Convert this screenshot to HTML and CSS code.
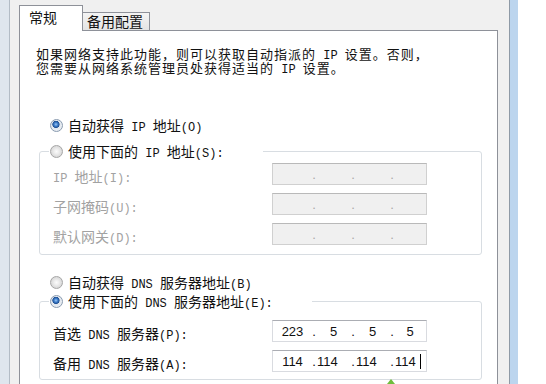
FILE: index.html
```html
<!DOCTYPE html>
<html lang="zh-CN">
<head>
<meta charset="utf-8">
<title>Internet 协议版本 4 (TCP/IPv4) 属性</title>
<link rel="stylesheet" href="styles.css">
</head>
<body>
<div class="frame-l"></div>
<div class="dialog">
  <div class="tabs">
    <div class="tab active">常规</div>
    <div class="tab">备用配置</div>
  </div>
  <div class="panel">
    <p class="intro">如果网络支持此功能，则可以获取自动指派的<span class="en"> IP </span>设置。否则，<br>您需要从网络系统管理员处获得适当的<span class="en"> IP </span>设置。</p>

    <div class="opt"><span class="radio on"></span><span>自动获得<span class="en"> IP </span>地址<span class="en">(O)</span></span></div>
    <fieldset class="group g1">
      <legend><span class="lg"><span class="radio"></span><span>使用下面的<span class="en"> IP </span>地址<span class="en">(S):</span></span></span></legend>
      <div class="fields">
        <span class="lbl off"><span class="en">IP </span>地址<span class="en">(I):</span></span>
        <div class="ip dis"><span class="s1"></span><span class="d">.</span><span class="s"></span><span class="d">.</span><span class="s"></span><span class="d">.</span><span class="s4"></span></div>
        <span class="lbl off">子网掩码<span class="en">(U):</span></span>
        <div class="ip dis"><span class="s1"></span><span class="d">.</span><span class="s"></span><span class="d">.</span><span class="s"></span><span class="d">.</span><span class="s4"></span></div>
        <span class="lbl off">默认网关<span class="en">(D):</span></span>
        <div class="ip dis"><span class="s1"></span><span class="d">.</span><span class="s"></span><span class="d">.</span><span class="s"></span><span class="d">.</span><span class="s4"></span></div>
      </div>
    </fieldset>

    <div class="opt opt-dns"><span class="radio"></span><span>自动获得<span class="en"> DNS </span>服务器地址<span class="en">(B)</span></span></div>
    <fieldset class="group g2">
      <legend><span class="lg"><span class="radio on"></span><span>使用下面的<span class="en"> DNS </span>服务器地址<span class="en">(E):</span></span></span></legend>
      <div class="fields">
        <span class="lbl">首选<span class="en"> DNS </span>服务器<span class="en">(P):</span></span>
        <div class="ip"><span class="s1">223</span><span class="d">.</span><span class="s">5</span><span class="d">.</span><span class="s">5</span><span class="d">.</span><span class="s4">5</span></div>
        <span class="lbl">备用<span class="en"> DNS </span>服务器<span class="en">(A):</span></span>
        <div class="ip typed"><span class="s1">114</span><span class="d">.</span><span class="s">114</span><span class="d">.</span><span class="s">114</span><span class="d">.</span><span class="s4">114<span class="caret"></span></span></div>
      </div>
    </fieldset>
  </div>
</div>
<div class="frame-r"></div>
<div class="pointer"></div>
</body>
</html>
```
FILE: styles.css
```css
html, body {
  margin: 0;
  padding: 0;
}
body {
  position: relative;
  display: flex;
  width: 546px;
  height: 384px;
  overflow: hidden;
  background: #ffffff;
  font-family: "Noto Sans CJK SC", sans-serif;
  font-size: 14px;
  color: #111;
}
.frame-l {
  flex: none;
  width: 9px;
  background: #dfe6ee;
  border-right: 1px solid #b3bcc6;
}
.dialog {
  flex: none;
  width: 479px;
  padding: 5px 11px 0 9px;
  background: #f0f0f0;
  display: flex;
  flex-direction: column;
}
.frame-r {
  flex: none;
  width: 8px;
  background: #bcd5ee;
  border-left: 1px solid #8e9aa6;
}
.tabs {
  display: flex;
  align-items: flex-end;
  height: 25px;
}
.tab {
  box-sizing: border-box;
  height: 18px;
  width: 67px;
  padding-left: 4px;
  line-height: 17px;
  border-top: 1px solid #8e9199;
  border-right: 1px solid #8e9199;
  background: linear-gradient(#f4f4f4, #e4e4e4);
  white-space: nowrap;
}
.tab.active {
  position: relative;
  z-index: 1;
  width: 64px;
  height: 26px;
  margin-bottom: -1px;
  padding: 3px 0 0 9px;
  border-left: 1px solid #8e9199;
  background: #ffffff;
}
.panel {
  flex: 1;
  box-sizing: border-box;
  background: #ffffff;
  border: 1px solid #8e9199;
  border-bottom: none;
}
.intro {
  margin: 16px 0 0 16px;
  height: 26px;
  font-size: 13px;
  letter-spacing: 1px;
  line-height: 14px;
  white-space: nowrap;
}
.en {
  font-family: "Liberation Mono", monospace;
  font-size: 12px;
  line-height: 0;
  letter-spacing: 0;
}
.opt {
  display: flex;
  align-items: center;
  height: 17px;
  line-height: 17px;
  margin: 43.5px 0 0 30px;
  white-space: nowrap;
}
.opt-dns {
  margin-top: 18.5px;
}
.radio {
  flex: none;
  box-sizing: border-box;
  width: 13px;
  height: 13px;
  margin-right: 5px;
  border-radius: 50%;
  border: 1px solid #a6a6a6;
  background: radial-gradient(circle, #fbfbfb 0, #f0f0f0 2px, #d9d9d9 5.5px);
}
.radio.on {
  border-color: #8a9bb0;
  background:
    radial-gradient(circle at 45% 40%, #9cc7f2 0, #3f7fcc 1.8px, #1f4f92 3.3px, #dfe6ee 3.9px, #e8ecf1 5.5px);
}
.group {
  box-sizing: border-box;
  width: 443px;
  min-width: 0;
  margin: 9px 0 0 19px;
  padding: 0 0 9px 0;
  border: 1px solid #d8dde2;
  border-radius: 3px;
}
.group legend {
  margin-left: 9px;
  padding: 0 39px 0 1px;
}
.lg {
  display: flex;
  align-items: center;
  height: 17px;
  line-height: 17px;
  white-space: nowrap;
}
.g2 {
  margin-top: 2px;
  padding-bottom: 7px;
}
.fields {
  display: grid;
  grid-template-columns: 219px 155px;
  grid-auto-rows: 22px;
  row-gap: 8px;
  margin: 3.5px 0 0 13px;
}
.g2 .fields {
  margin-top: 10.5px;
}
.lbl {
  align-self: center;
  margin-top: 4px;
  line-height: 17px;
  white-space: nowrap;
}
.off {
  color: #a2a2a2;
}
.ip {
  display: flex;
  align-items: center;
  box-sizing: border-box;
  height: 22px;
  border: 1px solid #d9dbe0;
  border-top-color: #abadb3;
  background: #ffffff;
  font-family: "Liberation Sans", sans-serif;
  font-size: 13px;
  line-height: 15px;
  color: #111;
}
.ip.dis {
  background: #f0f0f0;
  border-color: #d0d0d0;
  border-top-color: #b9b9b9;
  color: #a8a8a8;
}
.ip span {
  box-sizing: border-box;
  text-align: center;
  white-space: nowrap;
}
.s1 { width: 39px; }
.s { width: 35px; }
.s4 { width: 32px; }
.d { width: 4px; }
.typed .s,
.typed .s4 {
  text-align: left;
  padding-left: 1px;
}
.caret {
  display: inline-block;
  width: 1px;
  height: 15px;
  margin-left: 4px;
  vertical-align: -3px;
  background: #000;
}
.pointer {
  position: absolute;
  left: 387px;
  top: 379px;
  width: 0;
  height: 0;
  border-left: 4px solid transparent;
  border-right: 4px solid transparent;
  border-bottom: 5px solid #6fbd3c;
}
```
